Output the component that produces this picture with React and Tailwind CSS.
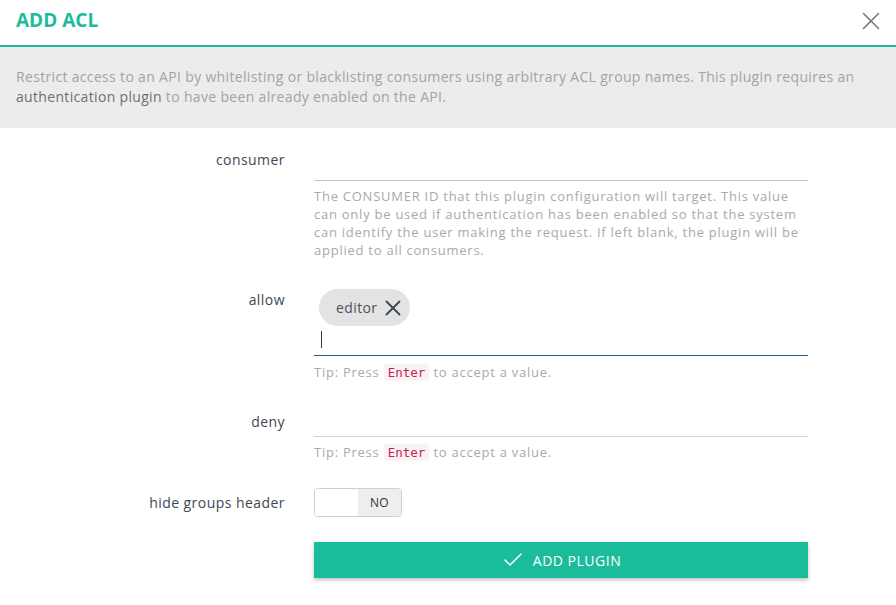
import React from "react";
import { X, Check } from "lucide-react";

const font = { fontFamily: '"Open Sans", "Liberation Sans", sans-serif' };

const Tip = () => (
  <p className="text-[13px] leading-[18px] tracking-[0.75px] text-[#a9a9a9]">
    Tip: Press{" "}
    <code className="rounded-[3px] bg-[#f9f2f4] px-[4px] py-[1px] font-['DejaVu_Sans_Mono',monospace] text-[12.5px] tracking-normal text-[#c7254e]">
      Enter
    </code>{" "}
    to accept a value.
  </p>
);

const Row = ({ label, labelPad, className = "", children }) => (
  <div className={`flex ${className}`}>
    <div className={`w-[285px] shrink-0 text-right text-[14px] leading-5 tracking-[0.45px] text-[#3e4852] ${labelPad}`}>
      {label}
    </div>
    <div className="ml-[29px] w-[494px]">{children}</div>
  </div>
);

export default function App() {
  return (
    <div className="h-[605px] w-[896px] overflow-hidden bg-white" style={font}>
      {/* Header */}
      <div className="flex h-[47px] items-center justify-between border-b-2 border-[#1abc9c] pl-4 pr-[10px] pb-[4px]">
        <h1 className="text-[19px] font-bold text-[#1abc9c]">ADD ACL</h1>
        <X className="h-[30px] w-[30px] text-[#7a7a7a]" strokeWidth={1.3} />
      </div>

      {/* Description */}
      <div className="bg-[#ececec] px-4 pt-[20px] pb-[21px] text-[14px] leading-5 tracking-[0.33px] text-[#a3a3a3]">
        Restrict access to an API by whitelisting or blacklisting consumers using arbitrary ACL group names. This plugin requires an{" "}
        <span className="text-[#6f6f6f]">authentication plugin</span> to have been already enabled on the API.
      </div>

      {/* consumer */}
      <Row label="consumer" labelPad="pt-[2px]" className="mt-[20px]">
        <div className="h-[33px] border-b border-[#c4c4c4]" />
        <p className="mt-[6px] text-[13px] leading-[18px] tracking-[0.75px] text-[#a9a9a9]">
          The CONSUMER ID that this plugin configuration will target. This value can only be used if authentication has been enabled so that the system can identify the user making the request. If left blank, the plugin will be applied to all consumers.
        </p>
      </Row>

      {/* allow */}
      <Row label="allow" labelPad="pt-[6px]" className="mt-[25px]">
        <div className="border-b border-[#1f5c8c]">
          <div className="pt-[5px] pl-[5px]">
            <span className="inline-flex h-[37px] items-center gap-[2px] rounded-full bg-[#e3e3e3] pl-[17px] pr-[4px] text-[14px] tracking-[0.4px] text-[#4a5560]">
              editor
              <X className="h-[26px] w-[26px] text-[#3e4852]" strokeWidth={1.7} />
            </span>
          </div>
          <div className="flex h-[29px] items-center pl-[7px]">
            <div className="mt-[-2px] h-[17px] w-px bg-[#333]" />
          </div>
        </div>
        <div className="mt-[7px]">
          <Tip />
        </div>
      </Row>

      {/* deny */}
      <Row label="deny" labelPad="pt-[8px]" className="mt-[22px]">
        <div className="h-[33px] border-b border-[#d4d4d4]" />
        <div className="mt-[6px]">
          <Tip />
        </div>
      </Row>

      {/* hide groups header */}
      <Row label="hide groups header" labelPad="pt-[5px]" className="mt-[26px]">
        <div className="flex h-[29px] w-[88px] overflow-hidden rounded-[4px] border border-[#cfcfcf]">
          <div className="w-[43px] bg-white" />
          <div className="flex flex-1 items-center justify-center bg-[#eeeeee] text-[12px] tracking-[0.3px] text-[#333]">NO</div>
        </div>
      </Row>

      {/* submit */}
      <Row label="" labelPad="" className="mt-[25px]">
        <button className="flex h-[36px] w-full items-center justify-center gap-[8px] bg-[#1abc9c] text-[14px] tracking-[0.5px] text-white shadow-[0_2px_4px_rgba(0,0,0,0.25)]">
          <Check className="h-[24px] w-[24px]" strokeWidth={1.5} />
          ADD PLUGIN
        </button>
      </Row>
    </div>
  );
}
